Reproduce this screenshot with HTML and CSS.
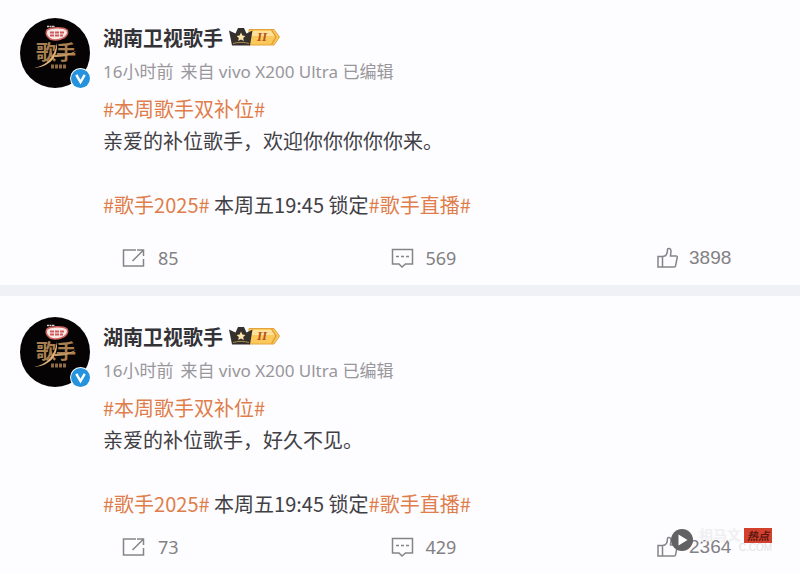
FILE: index.html
```html
<!DOCTYPE html>
<html lang="zh-CN">

<head>
    <meta charset="UTF-8">
    <meta name="viewport" content="width=device-width, initial-scale=1.0">
    <title>湖南卫视歌手</title>
    <link rel="stylesheet" href="styles.css">
</head>

<body>
    <!-- shared icons -->
    <svg class="sprite" aria-hidden="true">
        <symbol id="logo" viewBox="0 0 70 70">
            <circle cx="35" cy="35" r="35" fill="#050304" />
            <path d="M27 8.500h8" stroke="#d8d0cc" stroke-width="1.500" stroke-dasharray="2 .5" />
            <path d="M27 12c5-3 16-3 20 0 2 3-1 8-6 9-5 2-11 1-13-2-2-2-2-5-1-7z" fill="#fbe9e6" stroke="#d0605c" stroke-width="1.500" />
            <path d="M30 14.500h14M30 17.500h13" stroke="#cf5a5c" stroke-width="2" stroke-dasharray="4 1" />
            <path d="M31 48.500h16" stroke-width="4" stroke-dasharray="3 1" stroke="#8e6b43" />
        </symbol>
        <symbol id="swoosh" viewBox="0 0 70 70">
            <path d="M14 50c13-3 20-10 23-25 1 16-9 24-23 25z" fill="#dfb27a" />
            <path d="M34 37c8 0 15-1 22-4-6 5-14 6-22 6z" fill="#c59a64" />
        </symbol>
        <symbol id="verified" viewBox="0 0 20 20">
            <circle cx="10" cy="10" r="10" fill="#fff" />
            <circle cx="10" cy="10" r="9" fill="#2492dd" />
            <path d="M6 6.500l4 7 4-7" fill="none" stroke="#fff" stroke-width="2.300" />
        </symbol>
        <symbol id="vip" viewBox="0 0 52 20">
            <path d="M20 2.500h25l5.500 7.500-5.500 8H20z" fill="#fbc95a" stroke="#e3a33b" />
            <path d="M22 4h21l3 5H22z" fill="#fde09a" />
            <path d="M42.500 3l4.500 7-4.500 7.500" fill="none" stroke="#dc9a34" stroke-width="1.300" />
            <path d="M0 3.500l6.500 3L9 1h6l2.500 5.500 6-3-2.500 15H3z" fill="#35302c" />
            <path d="M12 5.500l1.400 3 3 .4-2.200 2.100.6 3-2.800-1.500L9.200 14l.6-3-2.200-2.100 3-.4z" fill="#fbe5ac" />
            <path d="M4 16.500c5-1.500 11-1.500 16 0" fill="none" stroke="#a98b4f" />
        </symbol>
        <symbol id="share" viewBox="0 0 24 20">
            <path d="M14 2H1.500v16h20v-7M15 2h6.500v6M21 2.500L10.500 13" />
        </symbol>
        <symbol id="comment" viewBox="0 0 24 20">
            <path d="M2.500 1.500h20V16h-7L12 19l-3-3H2.500zM6 8.500h3M11 8.500h3M16 8.500h3" />
        </symbol>
        <symbol id="like" viewBox="0 0 22 22">
            <path d="M1 9.500h4.500V20H1zM5.500 9.500c3 0 5-2 5-7 0-1.500 3.500-1.500 3.500 1.500 0 2-.5 3-.5 5H19c1 0 1.500.5 1.200 1.500L18.500 19c0 .7-.7 1-1.500 1H5.500" />
        </symbol>
    </svg>

    <main class="feed">
        <article class="post">
            <header class="post-header">
                <a href="#" class="avatar" aria-label="湖南卫视歌手">
                    <svg class="avatar-img" viewBox="0 0 70 70"><use href="#logo" /><text x="16" y="42" class="logo-text">歌手</text><use href="#swoosh" /></svg>
                    <svg class="avatar-badge"><use href="#verified" /></svg>
                </a>
                <div class="author">
                    <div class="name-row">
                        <a href="#" class="name">湖南卫视歌手</a>
                        <svg class="vip" viewBox="0 0 52 20"><use href="#vip" /><text x="28" y="14" class="vip-text">II</text></svg>
                    </div>
                    <div class="meta"><span>16小时前</span><span>来自 vivo X200 Ultra 已编辑</span></div>
                </div>
            </header>
            <div class="content">
                <p><a href="#">#本周歌手双补位#</a><br>亲爱的补位歌手，欢迎你你你你你来。</p>
                <p><a href="#">#歌手2025#</a> 本周五19:45 锁定<a href="#">#歌手直播#</a></p>
            </div>
            <footer class="actions">
                <button type="button"><svg class="icon"><use href="#share" /></svg>85</button>
                <button type="button"><svg class="icon"><use href="#comment" /></svg>569</button>
                <button type="button" class="like"><svg class="icon"><use href="#like" /></svg>3898</button>
            </footer>
        </article>

        <article class="post">
            <header class="post-header">
                <a href="#" class="avatar" aria-label="湖南卫视歌手">
                    <svg class="avatar-img" viewBox="0 0 70 70"><use href="#logo" /><text x="16" y="42" class="logo-text">歌手</text><use href="#swoosh" /></svg>
                    <svg class="avatar-badge"><use href="#verified" /></svg>
                </a>
                <div class="author">
                    <div class="name-row">
                        <a href="#" class="name">湖南卫视歌手</a>
                        <svg class="vip" viewBox="0 0 52 20"><use href="#vip" /><text x="28" y="14" class="vip-text">II</text></svg>
                    </div>
                    <div class="meta"><span>16小时前</span><span>来自 vivo X200 Ultra 已编辑</span></div>
                </div>
            </header>
            <div class="content">
                <p><a href="#">#本周歌手双补位#</a><br>亲爱的补位歌手，好久不见。</p>
                <p><a href="#">#歌手2025#</a> 本周五19:45 锁定<a href="#">#歌手直播#</a></p>
            </div>
            <footer class="actions">
                <button type="button"><svg class="icon"><use href="#share" /></svg>73</button>
                <button type="button"><svg class="icon"><use href="#comment" /></svg>429</button>
                <button type="button" class="like"><svg class="icon"><use href="#like" /></svg>2364</button>
            </footer>
            <div class="watermark">
                <svg class="watermark-play" viewBox="0 0 22 22">
                    <circle cx="11" cy="11" r="11" fill="#626164" />
                    <path d="M7.500 5.500l9 5.500-9 5.500z" fill="#fff" />
                </svg>
                <div class="watermark-text">
                    <div class="watermark-title">相马文<span class="watermark-tag">热点</span></div>
                    <div class="watermark-url">C.COM</div>
                </div>
            </div>
        </article>
    </main>
</body>

</html>
```
FILE: styles.css
```css
* {
    box-sizing: border-box;
}

body {
    margin: 0;
    font-family: "Noto Sans", "Noto Sans CJK SC", sans-serif;
    font-size: 20px;
    color: #414045;
    background-color: #fdfcfe;
}

a {
    color: #df7e4b;
    text-decoration: none;
}

.sprite {
    position: absolute;
    width: 0;
    height: 0;
}

.logo-text {
    font-family: "Noto Sans CJK SC", sans-serif;
    font-size: 20px;
    font-weight: bold;
    fill: #a87f50;
}

.vip-text {
    font-family: "Liberation Serif", serif;
    font-size: 13px;
    font-style: italic;
    font-weight: bold;
    fill: #b4531f;
}

/* Posts */
.post {
    position: relative;
    padding: 21px 20px 6px;
}

.post:first-child {
    padding-top: 18px;
    border-bottom: 11px solid #f0f1f6;
}

.post-header {
    display: flex;
    gap: 13px;
}

.avatar {
    position: relative;
    width: 70px;
    height: 70px;
}

.avatar-img {
    display: block;
    width: 100%;
    height: 100%;
}

.avatar-badge {
    position: absolute;
    right: -1px;
    bottom: -1px;
    width: 21px;
    height: 21px;
}

.name-row {
    display: flex;
    align-items: center;
    gap: 6px;
    height: 38px;
}

.name {
    color: #333236;
    font-weight: bold;
}

.vip {
    width: 52px;
    height: 20px;
}

.meta {
    display: flex;
    gap: 7px;
    font-size: 17px;
    line-height: 32px;
    color: #98979b;
}

/* Post text */
.content {
    padding: 5px 0 0 83px;
    font-family: "Noto Sans CJK SC", sans-serif;
    line-height: 32px;
}

.content p {
    margin: 0 0 32px;
}

.content p:last-child {
    margin-bottom: 0;
}

/* Share, comment, like */
.actions {
    display: grid;
    grid-template-columns: 1fr 1fr 75px;
    margin-top: 6px;
    padding: 0 48px 0 102px;
}

.post:first-child .actions {
    margin-top: 16px;
}

.actions button {
    display: flex;
    align-items: center;
    gap: 12px;
    height: 42px;
    padding: 0;
    border: none;
    background: none;
    font-family: inherit;
    font-size: 18px;
    color: #828185;
    cursor: pointer;
}

.actions .like {
    gap: 10px;
    font-family: "Liberation Sans", Arial, sans-serif;
    font-size: 19px;
}

.icon {
    width: 24px;
    height: 20px;
    fill: none;
    stroke: #858488;
    stroke-width: 1.500;
}

.like .icon {
    width: 22px;
    height: 22px;
}

/* Site mark over the last post */
.watermark {
    position: absolute;
    right: 28px;
    bottom: 21px;
    display: flex;
    align-items: center;
    gap: 6px;
    pointer-events: none;
}

.watermark-play {
    width: 22px;
    height: 22px;
}

.watermark-title {
    display: flex;
    align-items: center;
    gap: 3px;
    font-size: 14px;
    font-weight: bold;
    line-height: 16px;
    color: #f0eff2;
}

.watermark-tag {
    width: 28px;
    font-size: 11px;
    font-style: italic;
    line-height: 15px;
    text-align: center;
    color: #5a1712;
    background-color: #d2402e;
}

.watermark-url {
    font-family: "Liberation Sans", Arial, sans-serif;
    font-size: 10px;
    line-height: 10px;
    text-align: right;
    color: #e2e1e4;
}
```
